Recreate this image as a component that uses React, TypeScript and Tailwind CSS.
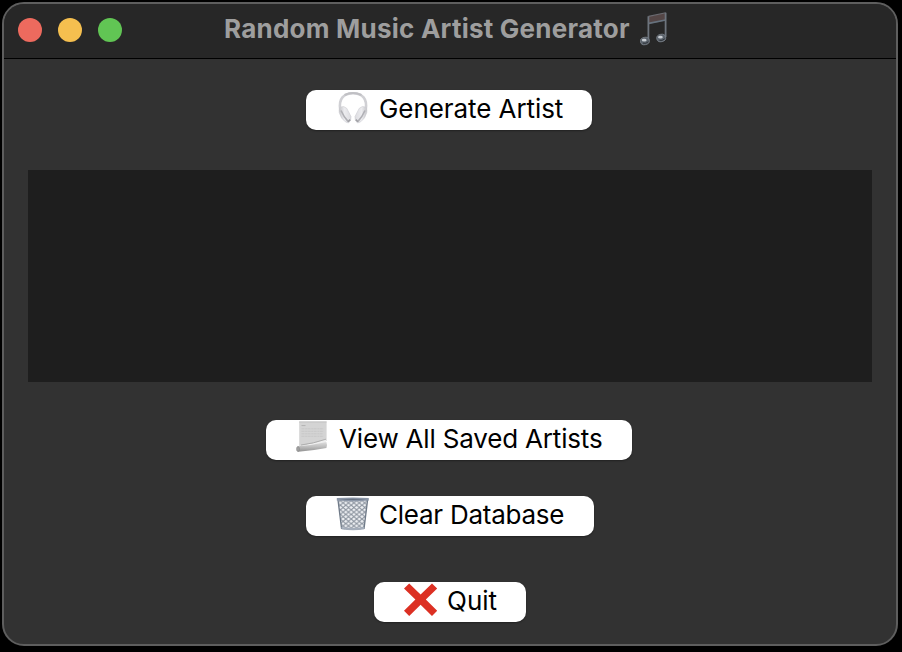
import type { ReactNode } from "react";

function NotesIcon() {
  return (
    <svg width="30" height="36" viewBox="0 0 30 36" fill="none" className="shrink-0">
      <path d="M8.4 5.4 L26 1.8 V9.4 L8.4 13Z" fill="#544646" />
      <path d="M8.8 12.4 L25.6 9" stroke="#66727e" strokeWidth="1.7" />
      <path d="M8.6 5.4 L25.8 1.8" stroke="#6a6a70" strokeWidth="1.1" />
      <path d="M8.4 29.5 V5.2 M25.6 1.7 V26" stroke="#6d747d" strokeWidth="1.8" />
      <ellipse cx="4.9" cy="30" rx="4.5" ry="3.7" transform="rotate(-12 4.9 30)" fill="#59616a" stroke="#7b828a" strokeWidth=".8" />
      <ellipse cx="21.2" cy="27" rx="4.5" ry="3.7" transform="rotate(-12 21.2 27)" fill="#59616a" stroke="#7b828a" strokeWidth=".8" />
      <ellipse cx="4.2" cy="29.2" rx="2.4" ry="1.4" fill="#c9ced3" />
      <ellipse cx="20.4" cy="26.2" rx="2.4" ry="1.4" fill="#c9ced3" />
      <path d="M3 32.2 Q6 33 8.4 30.8 M19.4 29.4 Q22 30.2 24.8 27.8" stroke="#30353b" strokeWidth="1" />
    </svg>
  );
}

function HeadphonesIcon() {
  return (
    <svg width="36" height="36" viewBox="0 0 36 36" fill="none">
      <defs>
        <linearGradient id="cup" x1="0" x2="1">
          <stop offset="0" stopColor="#c2c2c6" />
          <stop offset=".45" stopColor="#ececef" />
          <stop offset="1" stopColor="#dcdce0" />
        </linearGradient>
        <linearGradient id="cupMirror" x1="1" x2="0">
          <stop offset="0" stopColor="#c2c2c6" />
          <stop offset=".45" stopColor="#ececef" />
          <stop offset="1" stopColor="#dcdce0" />
        </linearGradient>
      </defs>
      <path d="M5.4 20 C3 8.8 9 3.2 18 3.2 C27 3.2 33 8.8 30.6 20" stroke="#d0d0d4" strokeWidth="2.6" />
      <path d="M9.5 5 Q18 1 26.5 5" stroke="#c0c0c4" strokeWidth="2" />
      <path
        d="M4.4 17.6 Q9 15 11.8 18.4 L16 26.5 Q16.6 30.6 13.4 33 Q10.6 33 6.6 28 Q2.8 21.8 4.4 17.6Z"
        fill="url(#cup)"
        stroke="#cdcdd1"
        strokeWidth=".6"
      />
      <path
        d="M31.6 17.6 Q27 15 24.2 18.4 L20 26.5 Q19.4 30.6 22.6 33 Q25.4 33 29.4 28 Q33.2 21.8 31.6 17.6Z"
        fill="url(#cupMirror)"
        stroke="#cdcdd1"
        strokeWidth=".6"
      />
      <path d="M6 20.5 Q8.6 26.5 13 31.4 M30 20.5 Q27.4 26.5 23 31.4" stroke="#b0b0b5" strokeWidth="1.6" />
      <path d="M13 31.8 L15.2 29.6 M23 31.8 L20.8 29.6" stroke="#a0a0a5" strokeWidth="1.6" />
    </svg>
  );
}

function ScrollIcon() {
  return (
    <svg width="36" height="36" viewBox="0 0 36 36" fill="none">
      <defs>
        <linearGradient id="roll" x1="0" y1="0" x2="0" y2="1">
          <stop offset="0" stopColor="#dedede" />
          <stop offset=".45" stopColor="#c0c0c0" />
          <stop offset="1" stopColor="#929292" />
        </linearGradient>
      </defs>
      <path d="M4.2 1.6 H31.6 V21 L4.2 26.5Z" fill="#d4d4d4" />
      <path d="M4.2 2 H31.6" stroke="#c2c2c2" />
      <path d="M6.5 5.6 h4" stroke="#b2b2b2" />
      <path d="M6.5 8.8 h22 M6.5 11.3 h22 M6.5 13.8 h21 M6.5 16.3 h22" stroke="#c6c6c6" strokeWidth=".9" strokeDasharray="3 .6 2 .5" />
      <path d="M3.6 26 Q18 24.6 31 19 V22.6 L8 28Z" fill="#efefef" />
      <path d="M6 25 Q18 23.6 31 19.2" stroke="#a9a9a9" strokeWidth=".9" />
      <path d="M3 26.2 Q17 25.4 31.4 22 Q32.6 25 31.4 28 Q18 30.6 3.4 31.8 Q.8 29 3 26.2Z" fill="url(#roll)" />
      <ellipse cx="3" cy="29" rx="1.4" ry="2.6" fill="#a2a2a2" stroke="#858585" strokeWidth=".6" />
    </svg>
  );
}

function TrashIcon() {
  return (
    <svg width="36" height="36" viewBox="0 0 36 36" fill="none">
      <defs>
        <pattern id="mesh" width="5.4" height="4.6" patternUnits="userSpaceOnUse">
          <path d="M0 0 L5.4 4.6 M5.4 0 L0 4.6" stroke="#8b939e" strokeWidth="1.1" />
        </pattern>
      </defs>
      <path d="M3 4 H32.6 L29 33 Q18 35 6.6 33Z" fill="#eef0f3" />
      <path d="M3 4 H32.6 L29 33 Q18 35 6.6 33Z" fill="url(#mesh)" />
      <path d="M3 4 L6.6 33 M32.6 4 L29 33" stroke="#6f7a88" strokeWidth="1.3" />
      <path d="M6.4 31 Q18 33 29.2 31 V33.2 Q18 35.4 6.6 33.2Z" fill="#a4adba" />
      <path d="M1.8 2 Q18 1 33.8 2 V4.6 Q18 6.2 1.8 4.6Z" fill="#8b96a7" />
      <path d="M4 3.2 Q18 2.2 31.6 3.2 Q18 4.6 4 3.2Z" fill="#687282" />
    </svg>
  );
}

function CrossIcon() {
  return (
    <svg width="36" height="36" viewBox="0 0 36 36">
      <path
        d="M1 6.6 L6.2 1.4 L17.6 12.4 L29 1.4 L34.2 6.6 L22.8 17.6 L34.2 28.8 L29 34 L17.6 22.8 L6.2 34 L1 28.8 L12.4 17.6Z"
        fill="#dc3023"
      />
    </svg>
  );
}

type PushButtonProps = { className: string; icon: ReactNode; label: string; labelClass: string };

function PushButton({ className, icon, label, labelClass }: PushButtonProps) {
  return (
    <button
      className={`flex h-10 shrink-0 items-start rounded-[10px] bg-white pl-[29px] text-[26px] text-black shadow-[0_1px_2px_rgba(0,0,0,0.35)] ${className}`}
    >
      <span className="h-9 w-9 shrink-0">{icon}</span>
      <span className={`ml-2 whitespace-nowrap leading-[37px] ${labelClass}`}>{label}</span>
    </button>
  );
}

export default function App() {
  return (
    <div className="h-[652px] w-[902px] overflow-hidden bg-black pl-[2px] pt-[2px] font-[Inter,sans-serif]">
      <div className="flex h-[644px] w-[896px] flex-col overflow-hidden rounded-[22px] border-2 border-[#5e5e5e] bg-[#323232]">
        <header className="flex h-[55px] shrink-0 items-start border-b border-black bg-[#272727]">
          <div className="ml-[14px] mt-[14px] flex gap-4">
            <span className="size-6 rounded-full bg-[#ed6a5e]" />
            <span className="size-6 rounded-full bg-[#f5bf4f]" />
            <span className="size-6 rounded-full bg-[#61c554]" />
          </div>
          <h1 className="ml-[102px] w-[416px] shrink-0 whitespace-nowrap text-[26px] font-bold leading-[50px] tracking-[0.23px] text-[#9e9e9e]">
            Random Music Artist Generator
          </h1>
          <div className="mt-[7px]">
            <NotesIcon />
          </div>
        </header>
        <main className="flex flex-col items-start pl-6 pt-[31px]">
          <PushButton className="ml-[278px] w-[286px]" icon={<HeadphonesIcon />} label="Generate Artist" labelClass="tracking-[-0.07px]" />
          <div className="mt-10 h-[212px] w-[844px] bg-[#1e1e1e]" />
          <PushButton className="ml-[238px] mt-[38px] w-[366px]" icon={<ScrollIcon />} label="View All Saved Artists" labelClass="tracking-[-0.18px]" />
          <PushButton className="ml-[278px] mt-9 w-[288px]" icon={<TrashIcon />} label="Clear Database" labelClass="tracking-[-0.25px]" />
          <PushButton className="ml-[346px] mt-[46px] w-[152px]" icon={<CrossIcon />} label="Quit" labelClass="" />
        </main>
      </div>
    </div>
  );
}
